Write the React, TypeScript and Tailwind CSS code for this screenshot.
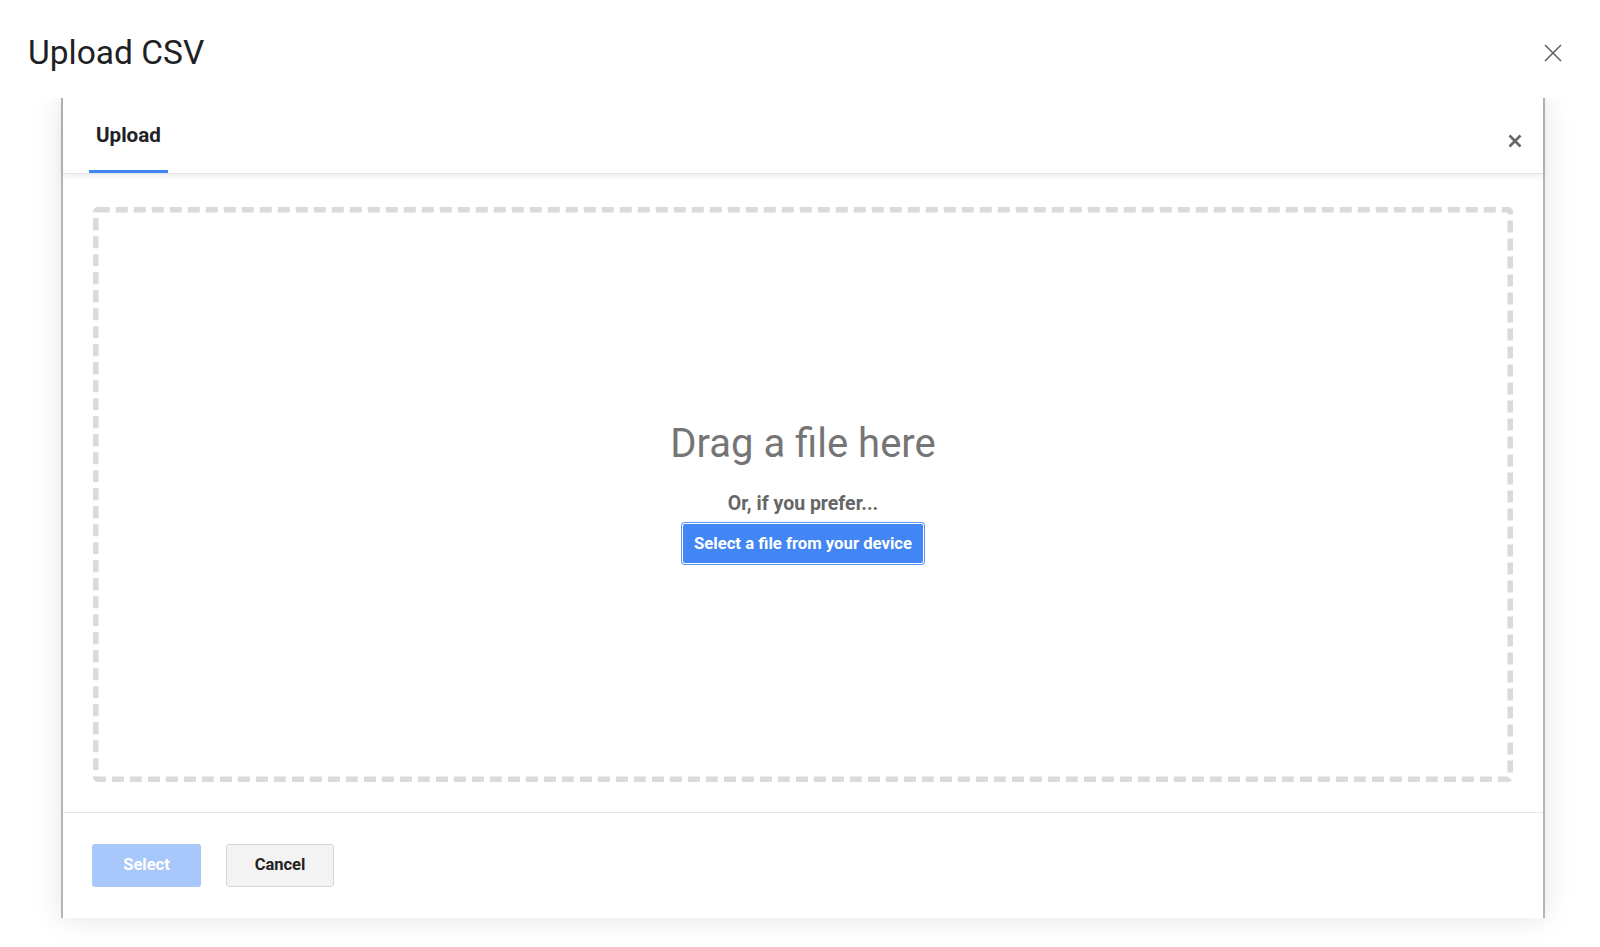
import * as React from "react"

/**
 * Upload CSV dialog — page title + close, then an embedded picker panel:
 * tab header (Upload), dashed drop zone, footer with Select / Cancel.
 */

function ThinClose() {
  return (
    <svg width="18" height="18" viewBox="0 0 18 18" aria-hidden>
      <path d="M1 1 L17 17 M17 1 L1 17" stroke="#5f6368" strokeWidth="1.6" fill="none" />
    </svg>
  )
}

function BoldClose() {
  return (
    <svg width="14" height="14" viewBox="0 0 14 14" aria-hidden>
      <path d="M1.5 1.5 L12.5 12.5 M12.5 1.5 L1.5 12.5" stroke="#666" strokeWidth="2.6" fill="none" />
    </svg>
  )
}

function DropZone() {
  return (
    <div className="relative flex h-[575px] flex-col items-center justify-center pb-[6px]">
      {/* dashed outline */}
      <svg className="absolute inset-0" width="1420" height="575" aria-hidden>
        <rect
          x="2.75"
          y="2.75"
          width="1414.5"
          height="569.5"
          rx="2"
          fill="none"
          stroke="#dadada"
          strokeWidth="5.5"
          strokeDasharray="12 6"
        />
      </svg>
      <div className="relative text-[40px] leading-[48px] text-[#757575]">Drag a file here</div>
      <div className="relative mt-[24px] text-[19.5px] font-bold leading-[24px] text-[#666]">
        Or, if you prefer...
      </div>
      <button
        type="button"
        className="relative mt-[8px] h-[39px] rounded-[2px] bg-[#4285f4] px-[11px] text-[16.7px] font-bold text-white ring-1 ring-[#5b96f6] ring-offset-1"
      >
        Select a file from your device
      </button>
    </div>
  )
}

export default function App() {
  return (
    <div className="h-[947px] w-full overflow-hidden bg-white font-['Roboto','Liberation_Sans',sans-serif]">
      <div className="flex items-center justify-between pl-[28px] pr-[38px] pt-[33px]">
        <h1 className="text-[33.5px] font-normal leading-[40px] text-[#202124]">Upload CSV</h1>
        <ThinClose />
      </div>

      <div className="mt-[25px] h-[849px] overflow-hidden px-[55px]">
        <div className="ml-[6px] flex h-[820px] w-[1484px] flex-col border-x-2 border-[#b4b4b4] bg-white shadow-[0_0_28px_rgba(0,0,0,0.11)]">
          <div className="relative z-10 flex h-[76px] justify-between border-b border-[#e4e4e4] bg-white shadow-[0_2px_6px_rgba(0,0,0,0.08)]">
            <div className="ml-[26px] h-[75px] border-b-[3px] border-[#4285f4] px-[7px] pt-[25px] text-[20.6px] font-bold leading-[24px] text-[#202124]">
              Upload
            </div>
            <div className="mr-[21px] mt-[36px] self-start">
              <BoldClose />
            </div>
          </div>

          <div className="px-[30px] pb-[30px] pt-[33px]">
            <DropZone />
          </div>

          <div className="flex gap-[25px] border-t border-[#e6e6e6] px-[29px] pt-[31px]">
            <button
              type="button"
              className="h-[43px] w-[109px] rounded-[3px] bg-[#a8c7fa] text-[16.5px] font-bold text-white"
            >
              Select
            </button>
            <button
              type="button"
              className="h-[43px] w-[108px] rounded-[3px] border border-[#d6d6d6] bg-[#f3f3f3] text-[16.5px] font-bold text-[#222]"
            >
              Cancel
            </button>
          </div>
        </div>
      </div>
    </div>
  )
}
